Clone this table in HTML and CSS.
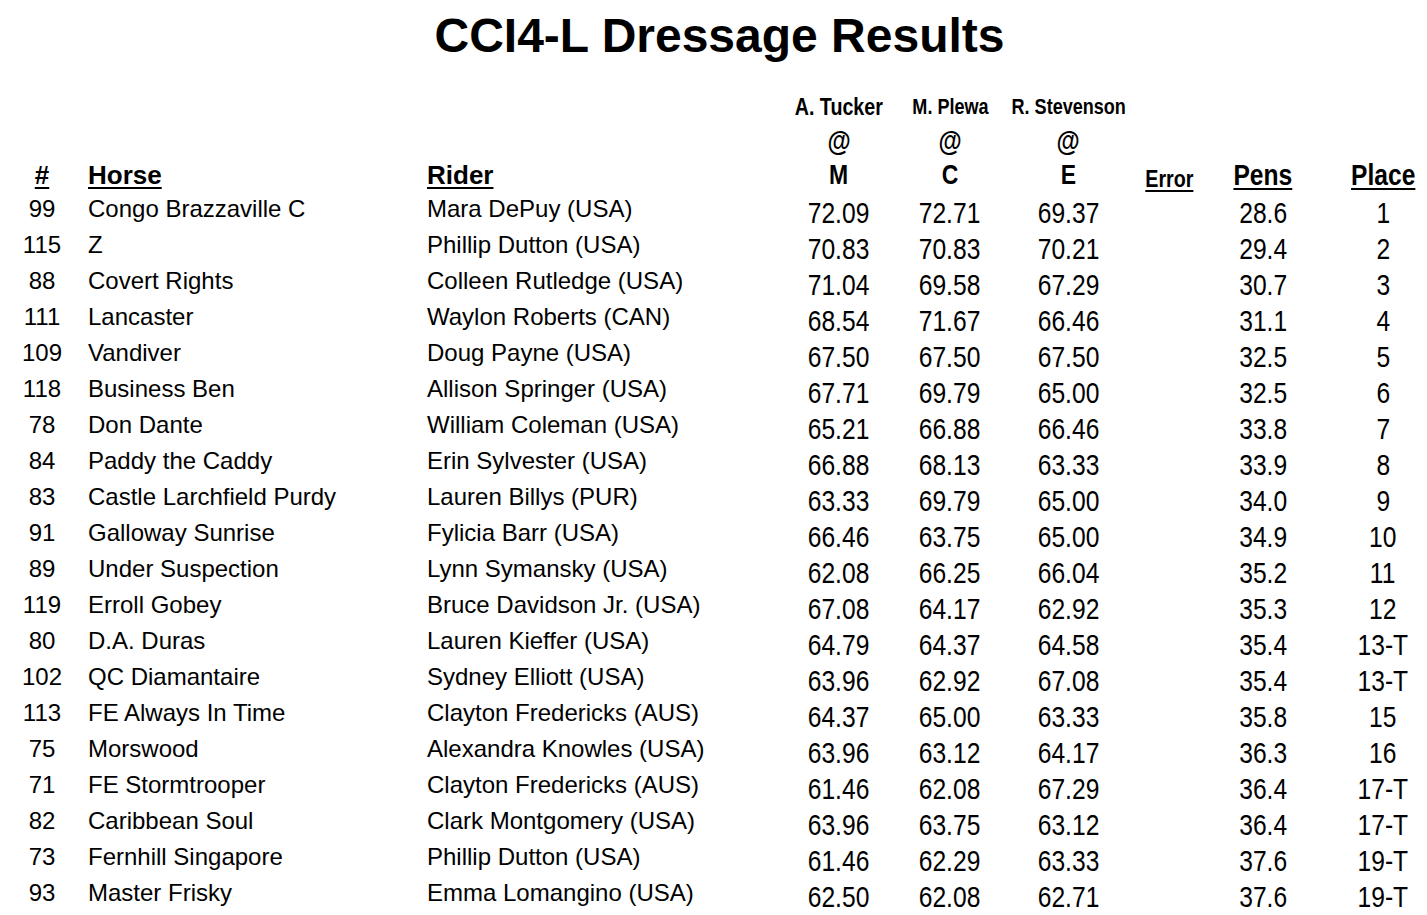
FILE: index.html
```html
<!DOCTYPE html>
<html lang="en">
<head>
<meta charset="utf-8">
<title>CCI4-L Dressage Results</title>
<link rel="stylesheet" href="styles.css">
</head>
<body>
<h1 class="title">CCI4-L Dressage Results</h1>
<table class="results">
  <colgroup>
    <col class="c-num"><col class="c-horse"><col class="c-rider"><col class="c-m"><col class="c-c"><col class="c-e"><col class="c-err"><col class="c-pens"><col class="c-place">
  </colgroup>
  <thead>
    <tr class="hr-judge">
      <th></th><th></th><th></th>
      <th class="judge judge-big"><span class="nw">A. Tucker</span></th>
      <th class="judge"><span class="nw">M. Plewa</span></th>
      <th class="judge"><span class="nw">R. Stevenson</span></th>
      <th></th><th></th><th></th>
    </tr>
    <tr class="hr-at">
      <th></th><th></th><th></th>
      <th class="at at-sign"><span class="nw">@</span></th><th class="at at-sign"><span class="nw">@</span></th><th class="at at-sign"><span class="nw">@</span></th>
      <th></th><th></th><th></th>
    </tr>
    <tr class="hr-main">
      <th class="h-main h-center"><span class="u">#</span></th>
      <th class="h-main h-left"><span class="u">Horse</span></th>
      <th class="h-main h-left"><span class="u">Rider</span></th>
      <th class="at"><span class="nw">M</span></th><th class="at"><span class="nw">C</span></th><th class="at"><span class="nw">E</span></th>
      <th class="h-err"><span class="nw u">Error</span></th>
      <th class="h-big"><span class="nw u">Pens</span></th>
      <th class="h-big h-place"><span class="nw u">Place</span></th>
    </tr>
  </thead>
  <tbody>
    <tr><td class="t num">99</td><td class="t name">Congo Brazzaville C</td><td class="t name">Mara DePuy (USA)</td><td class="n"><span class="nw">72.09</span></td><td class="n"><span class="nw">72.71</span></td><td class="n"><span class="nw">69.37</span></td><td class="n"></td><td class="n"><span class="nw">28.6</span></td><td class="n place"><span class="nw">1</span></td></tr>
    <tr><td class="t num">115</td><td class="t name">Z</td><td class="t name">Phillip Dutton (USA)</td><td class="n"><span class="nw">70.83</span></td><td class="n"><span class="nw">70.83</span></td><td class="n"><span class="nw">70.21</span></td><td class="n"></td><td class="n"><span class="nw">29.4</span></td><td class="n place"><span class="nw">2</span></td></tr>
    <tr><td class="t num">88</td><td class="t name">Covert Rights</td><td class="t name">Colleen Rutledge (USA)</td><td class="n"><span class="nw">71.04</span></td><td class="n"><span class="nw">69.58</span></td><td class="n"><span class="nw">67.29</span></td><td class="n"></td><td class="n"><span class="nw">30.7</span></td><td class="n place"><span class="nw">3</span></td></tr>
    <tr><td class="t num">111</td><td class="t name">Lancaster</td><td class="t name">Waylon Roberts (CAN)</td><td class="n"><span class="nw">68.54</span></td><td class="n"><span class="nw">71.67</span></td><td class="n"><span class="nw">66.46</span></td><td class="n"></td><td class="n"><span class="nw">31.1</span></td><td class="n place"><span class="nw">4</span></td></tr>
    <tr><td class="t num">109</td><td class="t name">Vandiver</td><td class="t name">Doug Payne (USA)</td><td class="n"><span class="nw">67.50</span></td><td class="n"><span class="nw">67.50</span></td><td class="n"><span class="nw">67.50</span></td><td class="n"></td><td class="n"><span class="nw">32.5</span></td><td class="n place"><span class="nw">5</span></td></tr>
    <tr><td class="t num">118</td><td class="t name">Business Ben</td><td class="t name">Allison Springer (USA)</td><td class="n"><span class="nw">67.71</span></td><td class="n"><span class="nw">69.79</span></td><td class="n"><span class="nw">65.00</span></td><td class="n"></td><td class="n"><span class="nw">32.5</span></td><td class="n place"><span class="nw">6</span></td></tr>
    <tr><td class="t num">78</td><td class="t name">Don Dante</td><td class="t name">William Coleman (USA)</td><td class="n"><span class="nw">65.21</span></td><td class="n"><span class="nw">66.88</span></td><td class="n"><span class="nw">66.46</span></td><td class="n"></td><td class="n"><span class="nw">33.8</span></td><td class="n place"><span class="nw">7</span></td></tr>
    <tr><td class="t num">84</td><td class="t name">Paddy the Caddy</td><td class="t name">Erin Sylvester (USA)</td><td class="n"><span class="nw">66.88</span></td><td class="n"><span class="nw">68.13</span></td><td class="n"><span class="nw">63.33</span></td><td class="n"></td><td class="n"><span class="nw">33.9</span></td><td class="n place"><span class="nw">8</span></td></tr>
    <tr><td class="t num">83</td><td class="t name">Castle Larchfield Purdy</td><td class="t name">Lauren Billys (PUR)</td><td class="n"><span class="nw">63.33</span></td><td class="n"><span class="nw">69.79</span></td><td class="n"><span class="nw">65.00</span></td><td class="n"></td><td class="n"><span class="nw">34.0</span></td><td class="n place"><span class="nw">9</span></td></tr>
    <tr><td class="t num">91</td><td class="t name">Galloway Sunrise</td><td class="t name">Fylicia Barr (USA)</td><td class="n"><span class="nw">66.46</span></td><td class="n"><span class="nw">63.75</span></td><td class="n"><span class="nw">65.00</span></td><td class="n"></td><td class="n"><span class="nw">34.9</span></td><td class="n place"><span class="nw">10</span></td></tr>
    <tr><td class="t num">89</td><td class="t name">Under Suspection</td><td class="t name">Lynn Symansky (USA)</td><td class="n"><span class="nw">62.08</span></td><td class="n"><span class="nw">66.25</span></td><td class="n"><span class="nw">66.04</span></td><td class="n"></td><td class="n"><span class="nw">35.2</span></td><td class="n place"><span class="nw">11</span></td></tr>
    <tr><td class="t num">119</td><td class="t name">Erroll Gobey</td><td class="t name">Bruce Davidson Jr. (USA)</td><td class="n"><span class="nw">67.08</span></td><td class="n"><span class="nw">64.17</span></td><td class="n"><span class="nw">62.92</span></td><td class="n"></td><td class="n"><span class="nw">35.3</span></td><td class="n place"><span class="nw">12</span></td></tr>
    <tr><td class="t num">80</td><td class="t name">D.A. Duras</td><td class="t name">Lauren Kieffer (USA)</td><td class="n"><span class="nw">64.79</span></td><td class="n"><span class="nw">64.37</span></td><td class="n"><span class="nw">64.58</span></td><td class="n"></td><td class="n"><span class="nw">35.4</span></td><td class="n place"><span class="nw">13-T</span></td></tr>
    <tr><td class="t num">102</td><td class="t name">QC Diamantaire</td><td class="t name">Sydney Elliott (USA)</td><td class="n"><span class="nw">63.96</span></td><td class="n"><span class="nw">62.92</span></td><td class="n"><span class="nw">67.08</span></td><td class="n"></td><td class="n"><span class="nw">35.4</span></td><td class="n place"><span class="nw">13-T</span></td></tr>
    <tr><td class="t num">113</td><td class="t name">FE Always In Time</td><td class="t name">Clayton Fredericks (AUS)</td><td class="n"><span class="nw">64.37</span></td><td class="n"><span class="nw">65.00</span></td><td class="n"><span class="nw">63.33</span></td><td class="n"></td><td class="n"><span class="nw">35.8</span></td><td class="n place"><span class="nw">15</span></td></tr>
    <tr><td class="t num">75</td><td class="t name">Morswood</td><td class="t name">Alexandra Knowles (USA)</td><td class="n"><span class="nw">63.96</span></td><td class="n"><span class="nw">63.12</span></td><td class="n"><span class="nw">64.17</span></td><td class="n"></td><td class="n"><span class="nw">36.3</span></td><td class="n place"><span class="nw">16</span></td></tr>
    <tr><td class="t num">71</td><td class="t name">FE Stormtrooper</td><td class="t name">Clayton Fredericks (AUS)</td><td class="n"><span class="nw">61.46</span></td><td class="n"><span class="nw">62.08</span></td><td class="n"><span class="nw">67.29</span></td><td class="n"></td><td class="n"><span class="nw">36.4</span></td><td class="n place"><span class="nw">17-T</span></td></tr>
    <tr><td class="t num">82</td><td class="t name">Caribbean Soul</td><td class="t name">Clark Montgomery (USA)</td><td class="n"><span class="nw">63.96</span></td><td class="n"><span class="nw">63.75</span></td><td class="n"><span class="nw">63.12</span></td><td class="n"></td><td class="n"><span class="nw">36.4</span></td><td class="n place"><span class="nw">17-T</span></td></tr>
    <tr><td class="t num">73</td><td class="t name">Fernhill Singapore</td><td class="t name">Phillip Dutton (USA)</td><td class="n"><span class="nw">61.46</span></td><td class="n"><span class="nw">62.29</span></td><td class="n"><span class="nw">63.33</span></td><td class="n"></td><td class="n"><span class="nw">37.6</span></td><td class="n place"><span class="nw">19-T</span></td></tr>
    <tr><td class="t num">93</td><td class="t name">Master Frisky</td><td class="t name">Emma Lomangino (USA)</td><td class="n"><span class="nw">62.50</span></td><td class="n"><span class="nw">62.08</span></td><td class="n"><span class="nw">62.71</span></td><td class="n"></td><td class="n"><span class="nw">37.6</span></td><td class="n place"><span class="nw">19-T</span></td></tr>
  </tbody>
</table>
</body>
</html>
```

FILE: styles.css
```css
html, body {
  margin: 0;
  padding: 0;
  background: #ffffff;
  overflow: hidden;
}

body {
  font-family: "Liberation Sans", Arial, sans-serif;
  color: #000000;
  width: 1427px;
  height: 915px;
}

th, td {
  padding: 0;
  white-space: nowrap;
}

.title {
  margin: 12px 0 0;
  padding-left: 12px;
  font-size: 48px;
  line-height: 48px;
  font-weight: bold;
  text-align: center;
}

.results {
  margin-top: 25px;
  width: 1427px;
  table-layout: fixed;
  border-collapse: collapse;
  border-spacing: 0;
}

.c-num { width: 84px; }
.c-horse { width: 339px; }
.c-rider { width: 360px; }
.c-m { width: 112px; }
.c-c { width: 110px; }
.c-e { width: 127px; }
.c-err { width: 74px; }
.c-pens { width: 114px; }
.c-place { width: 107px; }

th {
  vertical-align: bottom;
  text-align: center;
  font-weight: bold;
}

.hr-judge { height: 40px; }
.hr-at { height: 34px; }
.hr-main { height: 36px; }

/* Arial Narrow look: Arial metrics compressed to 82% width */
.nw {
  display: inline-block;
  transform: scaleX(0.82);
  transform-origin: 50% 50%;
}

.judge {
  font-size: 22px;
  line-height: 22px;
  padding-bottom: 7px;
}

.judge .nw {
  margin: 0 -14px;
}

.judge-big {
  font-size: 24px;
  line-height: 24px;
  padding-bottom: 6px;
}

.at {
  font-size: 28px;
  line-height: 28px;
  padding-bottom: 6px;
}

.at-sign {
  font-size: 29px;
  line-height: 29px;
  padding-bottom: 3px;
}

.h-main {
  font-size: 26px;
  line-height: 26px;
  padding-bottom: 7px;
}

.h-left {
  text-align: left;
  padding-left: 4px;
}

.h-err {
  font-size: 24px;
  line-height: 24px;
  padding-bottom: 4px;
}

.h-big {
  font-size: 30px;
  line-height: 30px;
  padding-bottom: 5px;
}

.u {
  text-decoration: underline;
  text-decoration-thickness: 2px;
  text-underline-offset: 3px;
}

td {
  height: 36px;
  box-sizing: border-box;
}

.t {
  font-size: 24px;
  line-height: 28px;
  padding-bottom: 8px;
  vertical-align: top;
}

.num { text-align: center; }

.name {
  text-align: left;
  padding-left: 4px;
}

.n {
  font-size: 30px;
  line-height: 30px;
  padding-top: 3px;
  vertical-align: top;
  text-align: center;
}

.h-place,
.place {
  padding-left: 19px;
}
```
